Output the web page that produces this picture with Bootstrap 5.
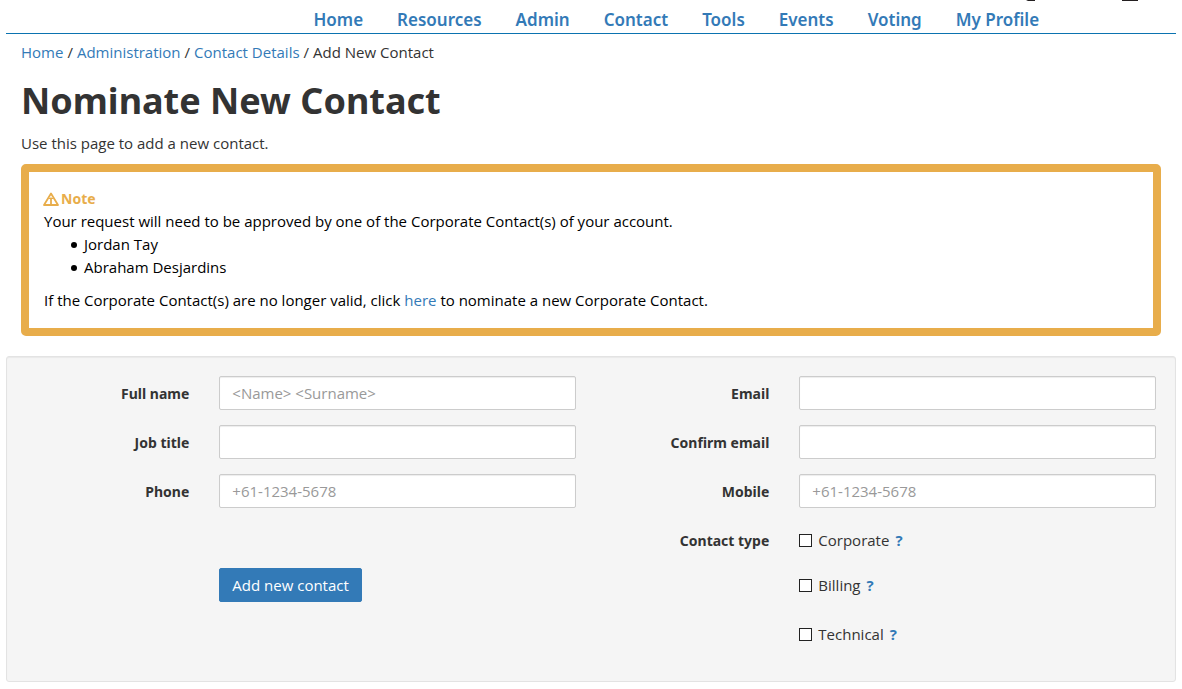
<!DOCTYPE html>
<html lang="en">
<head>
<meta charset="utf-8">
<meta name="viewport" content="width=device-width, initial-scale=1">
<title>Nominate New Contact</title>
<link href="https://cdn.jsdelivr.net/npm/bootstrap@5.3.0/dist/css/bootstrap.min.css" rel="stylesheet">
<style>
body { font-family: "Open Sans", "Noto Sans", sans-serif; font-size: 15px; line-height: 23px; color: #333; background: #fff; }
a { color: #337ab7; text-decoration: none; }
a:hover { text-decoration: underline; }
.page { padding: 0 6px; }
.brand-tail { height: 1px; padding-right: 38px; }
.brand-tail svg { width: 112px; height: 1px; }
.site-nav { border-bottom: 1px solid #0b73b0; height: 33px; --bs-gutter-x: 30px; }
.site-nav ul { gap: 34px; padding-top: 7px; }
.site-nav a, .page-title, .note-title, .field-name { font-family: "Noto Sans", "Open Sans", sans-serif; }
.site-nav a { font-size: 17px; line-height: 24px; font-weight: 600; white-space: nowrap; }
.intro { padding: 7px 15px 0; }
.trail { --bs-breadcrumb-item-padding-x: 4px; --bs-breadcrumb-divider-color: #333; --bs-breadcrumb-item-active-color: #333; }
.page-title { font-size: 36px; line-height: 44px; font-weight: 700; margin: 15px 0 9px; }
.note { border: 8px solid #e8ad4b; border-radius: 5px; color: #000; padding: 15px 15px 16px 14px; margin: 9px 0 20px; }
.note-title { color: #e8ad4b; font-size: 14px; line-height: 23px; font-weight: 700; gap: 2px; }
.note p { padding-left: 1px; }
.note ul { list-style: none; padding-left: 28px; margin-bottom: 10px; }
.note li { display: flex; align-items: center; gap: 7px; }
.note li::before { content: ""; width: 6px; height: 6px; border-radius: 50%; background: #000; }
.form-panel { background: #f5f5f5; border: 1px solid #e3e3e3; border-radius: 3px; padding: 19px; box-shadow: inset 0 1px 1px rgba(0,0,0,.05); }
.form-panel .row { --bs-gutter-x: 30px; }
.field { margin-bottom: 15px; }
.tight { margin-bottom: 11px; }
.form-panel .form-control { height: 34px; padding: 6px 12px; font-size: 15px; line-height: 20px; border-color: #ccc; border-radius: 2px; box-shadow: inset 0 1px 1px rgba(0,0,0,.075); }
.form-panel .form-control::placeholder { color: #999; }
.field-name { font-size: 14px; font-weight: 700; line-height: 34px; padding: 1px 15px 0; margin-bottom: -1px; }
.choice { height: 34px; gap: 6px; }
.choice input { appearance: none; width: 13px; height: 13px; border: 1px solid #222; background: #fff; margin: 0; }
.choice input:checked { background: #337ab7; }
.choice a { font-weight: 700; }
.submit-row { padding-top: 45px; }
.submit-btn { --bs-btn-bg: #337ab7; --bs-btn-border-color: #337ab7; --bs-btn-border-radius: 2px; --bs-btn-font-size: 15px; --bs-btn-padding-x: 12px; height: 34px; line-height: 20px; }
</style>
</head>
<body>
<div class="page">
  <div class="brand-tail d-flex justify-content-end" aria-hidden="true">
    <svg viewBox="0 0 112 1"><path d="M0 0h9v1H2zM96 0h16v1H96z" fill="#231f20"/></svg>
  </div>
  <nav class="site-nav row mx-0" aria-label="Main">
    <div class="col-md-9 offset-md-3">
      <ul class="list-unstyled d-flex mb-0">
        <li><a href="#">Home</a></li>
        <li><a href="#">Resources</a></li>
        <li><a href="#">Admin</a></li>
        <li><a href="#">Contact</a></li>
        <li><a href="#">Tools</a></li>
        <li><a href="#">Events</a></li>
        <li><a href="#">Voting</a></li>
        <li><a href="#">My Profile</a></li>
      </ul>
    </div>
  </nav>

  <main>
    <div class="intro">
      <nav aria-label="Breadcrumb">
        <ol class="breadcrumb trail mb-0">
          <li class="breadcrumb-item"><a href="#">Home</a></li>
          <li class="breadcrumb-item"><a href="#">Administration</a></li>
          <li class="breadcrumb-item"><a href="#">Contact Details</a></li>
          <li class="breadcrumb-item active" aria-current="page">Add New Contact</li>
        </ol>
      </nav>
      <h1 class="page-title">Nominate New Contact</h1>
      <p class="mb-0">Use this page to add a new contact.</p>

      <section class="note">
        <h2 class="note-title d-flex align-items-center mb-0">
          <svg width="16" height="14" viewBox="0 0 16 14" fill="none" stroke="#e8ad4b" aria-hidden="true"><path d="M8 1.5 15 13H1Z" stroke-width="1.8" stroke-linejoin="round"/><path d="M8 5.5V12" stroke-width="1.8"/><path d="M6 6.5h4" stroke-width="1"/></svg>
          Note
        </h2>
        <p class="mb-0">Your request will need to be approved by one of the Corporate Contact(s) of your account.</p>
        <ul>
          <li>Jordan Tay</li>
          <li>Abraham Desjardins</li>
        </ul>
        <p class="mb-0">If the Corporate Contact(s) are no longer valid, click <a href="#">here</a> to nominate a new Corporate Contact.</p>
      </section>
    </div>

    <form class="form-panel">
      <div class="row">
        <div class="col-md-6">
          <div class="row field">
            <label class="col-md-4 text-md-end field-name" for="fullName">Full name</label>
            <div class="col-md-8"><input class="form-control" id="fullName" type="text" placeholder="&lt;Name&gt; &lt;Surname&gt;"></div>
          </div>
          <div class="row field">
            <label class="col-md-4 text-md-end field-name" for="jobTitle">Job title</label>
            <div class="col-md-8"><input class="form-control" id="jobTitle" type="text"></div>
          </div>
          <div class="row field">
            <label class="col-md-4 text-md-end field-name" for="phone">Phone</label>
            <div class="col-md-8"><input class="form-control" id="phone" type="tel" placeholder="+61-1234-5678"></div>
          </div>
          <div class="row submit-row">
            <div class="col-md-8 offset-md-4"><button class="btn btn-primary submit-btn" type="submit">Add new contact</button></div>
          </div>
        </div>
        <div class="col-md-6">
          <div class="row field">
            <label class="col-md-4 text-md-end field-name" for="email">Email</label>
            <div class="col-md-8"><input class="form-control" id="email" type="email"></div>
          </div>
          <div class="row field">
            <label class="col-md-4 text-md-end field-name" for="confirmEmail">Confirm email</label>
            <div class="col-md-8"><input class="form-control" id="confirmEmail" type="email"></div>
          </div>
          <div class="row field">
            <label class="col-md-4 text-md-end field-name" for="mobile">Mobile</label>
            <div class="col-md-8"><input class="form-control" id="mobile" type="tel" placeholder="+61-1234-5678"></div>
          </div>
          <div class="row" role="group" aria-labelledby="typeName">
            <div class="col-md-4 text-md-end field-name" id="typeName">Contact type</div>
            <div class="col-md-8">
              <div class="choice tight d-flex align-items-center"><input type="checkbox" id="corporate"><label for="corporate">Corporate</label><a href="#" title="About corporate contacts">?</a></div>
              <div class="choice field d-flex align-items-center"><input type="checkbox" id="billing"><label for="billing">Billing</label><a href="#" title="About billing contacts">?</a></div>
              <div class="choice tight d-flex align-items-center"><input type="checkbox" id="technical"><label for="technical">Technical</label><a href="#" title="About technical contacts">?</a></div>
            </div>
          </div>
        </div>
      </div>
    </form>
  </main>
</div>
<script src="https://cdn.jsdelivr.net/npm/bootstrap@5.3.0/dist/js/bootstrap.bundle.min.js"></script>
</body>
</html>
